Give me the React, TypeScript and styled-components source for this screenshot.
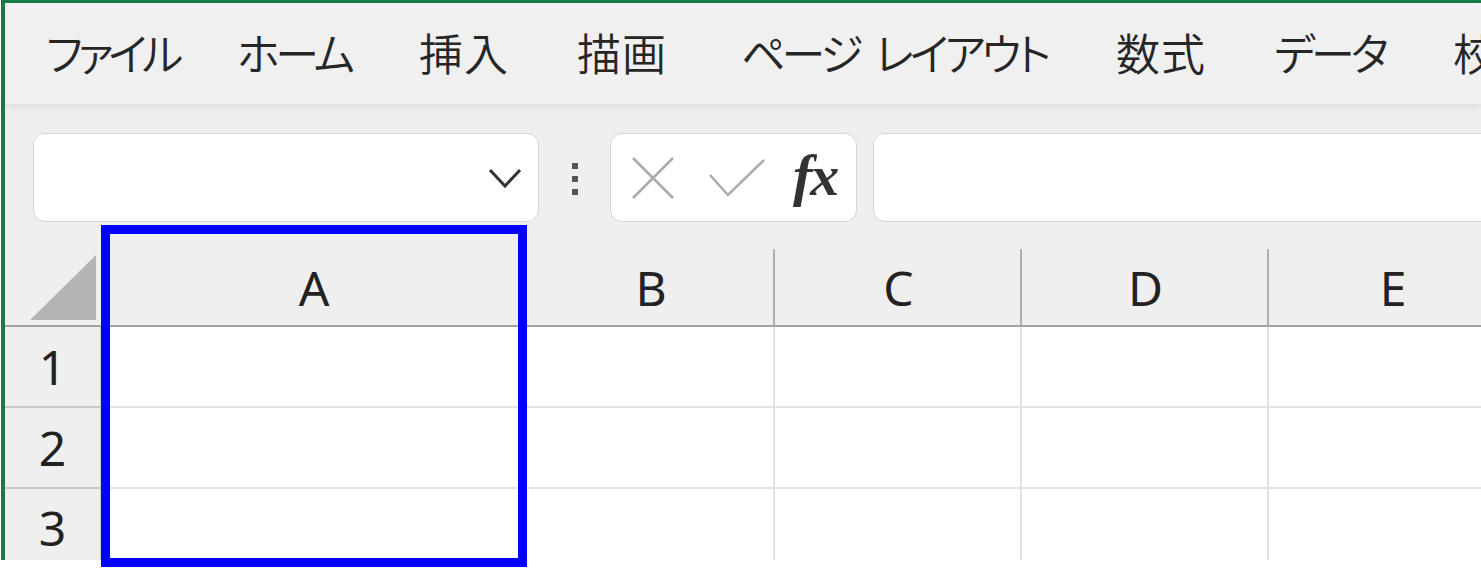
import React from 'react';
import styled, { createGlobalStyle } from 'styled-components';

const GlobalStyle = createGlobalStyle`
  html, body {
    margin: 0;
    padding: 0;
    background: #ffffff;
    overflow: hidden;
  }
  body {
    min-height: 569px;
    font-family: "Noto Sans", "Noto Sans CJK JP", sans-serif;
    color: #222;
  }
`;

const Window = styled.div`
  height: 560px;
  margin-left: 1px;
  border-top: 3px solid #177c45;
  border-left: 4px solid #177c45;
  background: #efefef;
  display: flex;
  flex-direction: column;
  box-sizing: border-box;
  position: relative;
`;

const Ribbon = styled.div`
  height: 102px;
  flex-shrink: 0;
  display: flex;
  align-items: center;
  padding: 0 0 3px 41px;
  box-sizing: border-box;
  background: #f0f0f0;
  border-bottom: 1px solid #e2e2e2;
  box-shadow: 0 3px 8px rgba(0, 0, 0, 0.07);
  overflow: hidden;
  white-space: nowrap;
  position: relative;
  z-index: 1;
`;

const Tab = styled.span<{ $slot: number; $spacing: number }>`
  flex: 0 0 ${(p) => p.$slot}px;
  font-family: "Noto Sans CJK JP", sans-serif;
  font-size: 44px;
  font-weight: 350;
  font-feature-settings: "palt";
  letter-spacing: ${(p) => p.$spacing}px;
  word-spacing: 10px;
  color: #262626;
  line-height: 1;
`;

const Toolbar = styled.div`
  display: flex;
  align-items: center;
  padding: 28px 0 25px 28px;
  overflow: hidden;
`;

const InputBox = styled.div<{ $width?: number }>`
  height: 89px;
  box-sizing: border-box;
  background: #ffffff;
  border: 1px solid #d6d6d6;
  border-radius: 12px;
  display: flex;
  align-items: center;
  flex-shrink: 0;
  width: ${(p) => (p.$width ? `${p.$width}px` : 'auto')};
`;

const NameBox = styled(InputBox)`
  justify-content: flex-end;
  padding-right: 15px;
`;

const FxBox = styled(InputBox)`
  padding-left: 20px;
  gap: 33px;
`;

const FormulaBox = styled(InputBox)`
  flex: 1;
  margin-left: 16px;
  margin-right: -40px;
`;

const Grip = styled.div`
  width: 6px;
  margin: 0 32px 0 33px;
  display: flex;
  flex-direction: column;
  gap: 7px;
  padding-top: 2px;

  span {
    width: 6px;
    height: 6px;
    background: #555;
  }
`;

const FxLabel = styled.span`
  font-family: "Liberation Serif", "Times New Roman", serif;
  font-style: italic;
  font-weight: 700;
  font-size: 58px;
  color: #333;
  margin-left: -6px;
  letter-spacing: -2px;
  line-height: 1;
  padding-bottom: 4px;
`;

const Sheet = styled.div`
  flex: 1;
  display: grid;
  grid-template-columns: 96px 426px 248px 247px 247px 248px;
  grid-template-rows: 80px 81px 81px 1fr;
  background: #ffffff;
  position: relative;
`;

const Corner = styled.div`
  background: #efefef;
  border-bottom: 2px solid #a3a3a3;
  box-sizing: border-box;
  display: flex;
  align-items: flex-end;
  justify-content: flex-end;
  padding: 0 5px 5px 0;

  &::before {
    content: '';
    width: 66px;
    height: 65px;
    background: #b4b4b4;
    clip-path: polygon(100% 0, 100% 100%, 0 100%);
  }
`;

const ColHead = styled.div`
  background: #efefef;
  border-bottom: 2px solid #a3a3a3;
  box-sizing: border-box;
  position: relative;
  display: flex;
  align-items: center;
  justify-content: center;
  font-size: 48px;
  color: #222;
  padding-top: 2px;

  &::after {
    content: '';
    position: absolute;
    right: 0;
    top: 2px;
    bottom: 0;
    width: 2px;
    background: #b0b0b0;
  }
`;

const RowHead = styled.div<{ $last?: boolean }>`
  background: #efefef;
  border-bottom: ${(p) => (p.$last ? 'none' : '2px solid #c8c8c8')};
  border-right: 1px solid #c8c8c8;
  box-sizing: border-box;
  display: flex;
  align-items: center;
  justify-content: center;
  font-size: 48px;
  color: #222;
  padding-top: ${(p) => (p.$last ? '6px' : '0')};
`;

const Cell = styled.div<{ $last?: boolean }>`
  border-right: 2px solid #e3e3e3;
  border-bottom: ${(p) => (p.$last ? 'none' : '2px solid #e3e3e3')};
  box-sizing: border-box;
`;

const Highlight = styled.div`
  position: absolute;
  left: 96px;
  top: -22px;
  width: 426px;
  height: 342px;
  border: 9px solid #0000ff;
  box-sizing: border-box;
  pointer-events: none;
`;

const tabs = [
  { label: 'ファイル', slot: 191, spacing: -5 },
  { label: 'ホーム', slot: 182, spacing: -4 },
  { label: '挿入', slot: 158, spacing: 1 },
  { label: '描画', slot: 164, spacing: 1 },
  { label: 'ページ レイアウト', slot: 375, spacing: -4 },
  { label: '数式', slot: 158, spacing: 1 },
  { label: 'データ', slot: 179, spacing: -4 },
  { label: '校閲', slot: 120, spacing: 1 },
];
const columns = ['A', 'B', 'C', 'D', 'E'];
const rows = [1, 2, 3];

const Chevron = () => (
  <svg width="36" height="22" viewBox="0 0 36 22" fill="none">
    <polyline points="3,3 18,19 33,3" stroke="#333" strokeWidth="3" strokeLinejoin="miter" />
  </svg>
);

const CancelIcon = () => (
  <svg width="44" height="44" viewBox="0 0 44 44" fill="none">
    <line x1="2" y1="2" x2="42" y2="42" stroke="#ababab" strokeWidth="2.5" />
    <line x1="42" y1="2" x2="2" y2="42" stroke="#ababab" strokeWidth="2.5" />
  </svg>
);

const EnterIcon = () => (
  <svg width="58" height="40" viewBox="0 0 58 40" fill="none">
    <polyline points="2,17 20,37 56,2" stroke="#ababab" strokeWidth="2.5" />
  </svg>
);

export default function App() {
  return (
    <>
      <GlobalStyle />
      <Window>
        <Ribbon>
          {tabs.map((t) => (
            <Tab key={t.label} $slot={t.slot} $spacing={t.spacing}>
              {t.label}
            </Tab>
          ))}
        </Ribbon>

        <Toolbar>
          <NameBox $width={506}>
            <Chevron />
          </NameBox>
          <Grip>
            <span />
            <span />
            <span />
          </Grip>
          <FxBox $width={247}>
            <CancelIcon />
            <EnterIcon />
            <FxLabel>fx</FxLabel>
          </FxBox>
          <FormulaBox />
        </Toolbar>

        <Sheet>
          <Corner />
          {columns.map((c) => (
            <ColHead key={c}>{c}</ColHead>
          ))}
          {rows.map((r) => (
            <React.Fragment key={r}>
              <RowHead $last={r === 3}>{r}</RowHead>
              {columns.map((c) => (
                <Cell key={c} $last={r === 3} />
              ))}
            </React.Fragment>
          ))}
          <Highlight />
        </Sheet>
      </Window>
    </>
  );
}
